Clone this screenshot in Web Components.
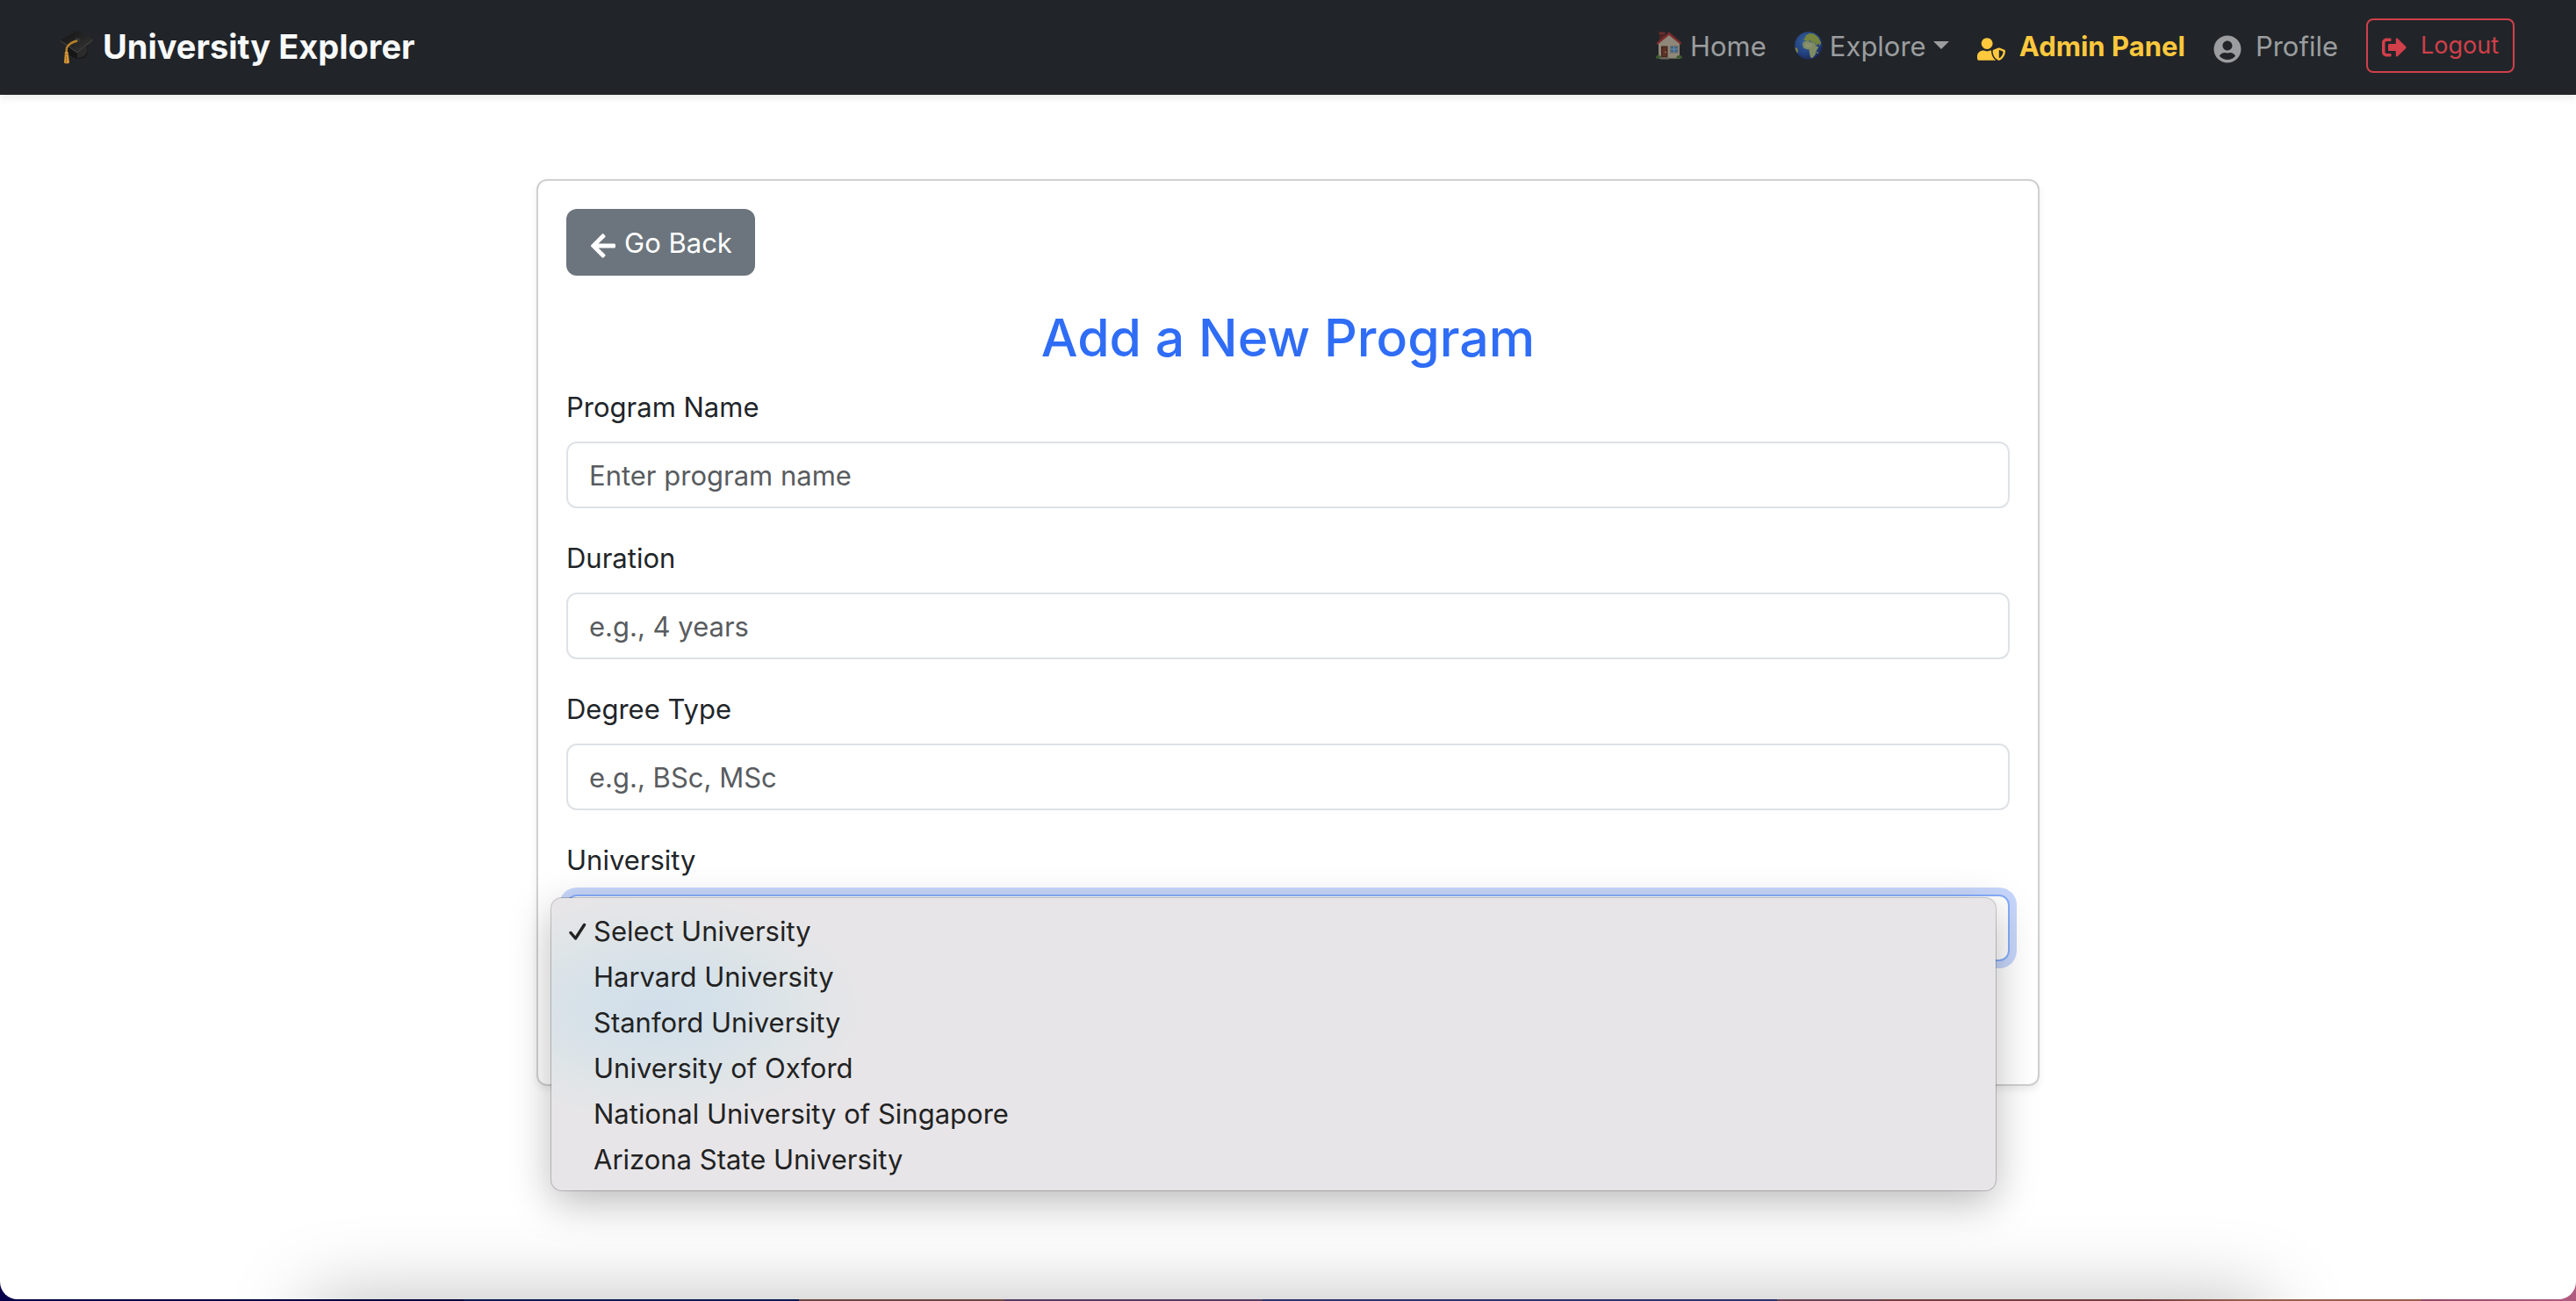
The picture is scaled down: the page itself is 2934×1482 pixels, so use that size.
<!DOCTYPE html>
<html lang="en">
<head>
<meta charset="utf-8">
<title>University Explorer</title>
<style>
  body {
    margin: 0;
    font: 400 31px/48px Inter, "Liberation Sans", sans-serif;
    color: #212529;
    background: linear-gradient(90deg, #06004a 0, #02003a 18%, #0a1850 18%, #0a1850 31%, #6f4545 31%, #6f4545 39%, #563a63 39%, #563a63 49%, #26346a 49%, #26346a 69%, #6a4456 69%, #6a4456 73%, #6f4040 73%, #6f4040 83%, #96604a 87%, #96604a 94%, #8c4a66 94%, #b05c80 100%);
  }
</style>
</head>
<body>
<ue-window>
  <ue-navbar slot="header">
    <ue-brand slot="brand">University Explorer</ue-brand>
    <ue-nav-link icon="house" tight>Home</ue-nav-link>
    <ue-nav-link icon="globe" tight caret>Explore</ue-nav-link>
    <ue-nav-link icon="shield" accent>Admin Panel</ue-nav-link>
    <ue-nav-link icon="user">Profile</ue-nav-link>
    <ue-button variant="outline" icon="logout">Logout</ue-button>
  </ue-navbar>
  <ue-card heading="Add a New Program">
    <ue-button slot="action" variant="secondary" icon="back">Go Back</ue-button>
    <ue-text-field label="Program Name" placeholder="Enter program name"></ue-text-field>
    <ue-text-field label="Duration" placeholder="e.g., 4 years"></ue-text-field>
    <ue-text-field label="Degree Type" placeholder="e.g., BSc, MSc"></ue-text-field>
    <ue-select-field label="University"></ue-select-field>
    <ue-button variant="primary"></ue-button>
  </ue-card>
</ue-window>

<script>
const ICONS = {
  shield: ['0 0 640 512', '<path fill="currentColor" d="M622.3 271.1l-115.2-45c-4.1-1.6-12.6-3.7-22.2 0l-115.2 45c-10.7 4.2-17.7 14-17.7 24.9 0 111.6 68.7 188.8 132.9 213.9 9.6 3.7 18 1.6 22.2 0C558.4 489.9 640 420.5 640 296c0-10.9-7-20.7-17.7-24.9zM496 462.4V273.3l95.5 37.3c-5.6 87.1-60.9 135.4-95.5 151.8zM224 256c70.7 0 128-57.3 128-128S294.7 0 224 0 96 57.3 96 128s57.3 128 128 128zm96 40c0-2.5.8-4.8 1.1-7.2-2.5-.1-4.9-.8-7.5-.8h-16.7c-22.2 10.2-46.9 16-72.9 16s-50.6-5.8-72.9-16h-16.7C60.2 288 0 348.2 0 422.4V464c0 26.5 21.5 48 48 48h352c6.8 0 13.3-1.5 19.2-4-54-42.9-99.2-116.7-99.2-212z"/>'],
  user: ['0 0 496 512', '<path fill="currentColor" d="M248 8C111 8 0 119 0 256s111 248 248 248 248-111 248-248S385 8 248 8zm0 96c48.6 0 88 39.4 88 88s-39.4 88-88 88-88-39.4-88-88 39.4-88 88-88zm0 344c-58.7 0-111.3-26.6-146.5-68.2 18.8-35.4 55.6-59.8 98.5-59.8 2.4 0 4.8.4 7.1 1.1 13 4.2 26.6 6.9 40.9 6.9 14.3 0 28-2.7 40.9-6.9 2.3-.7 4.7-1.1 7.1-1.1 42.9 0 79.7 24.4 98.5 59.8C359.3 421.4 306.7 448 248 448z"/>'],
  logout: ['0 0 512 512', '<path fill="currentColor" d="M497 273L329 441c-15 15-41 4.5-41-17v-96H152c-13.3 0-24-10.7-24-24v-96c0-13.3 10.7-24 24-24h136V88c0-21.4 25.9-32 41-17l168 168c9.3 9.4 9.3 24.6 0 34zM192 436v-40c0-6.6-5.4-12-12-12H96c-17.7 0-32-14.3-32-32V160c0-17.7 14.3-32 32-32h84c6.6 0 12-5.4 12-12V76c0-6.6-5.4-12-12-12H96c-53 0-96 43-96 96v192c0 53 43 96 96 96h84c6.6 0 12-5.4 12-12z"/>'],
  back: ['0 0 448 512', '<path fill="currentColor" d="M257.5 445.1l-22.2 22.2c-9.4 9.4-24.6 9.4-33.9 0L7 273c-9.4-9.4-9.4-24.6 0-33.9L201.4 44.7c9.4-9.4 24.6-9.4 33.9 0l22.2 22.2c9.5 9.5 9.3 25-.4 34.3L136.6 216H424c13.3 0 24 10.7 24 24v32c0 13.3-10.7 24-24 24H136.6l120.5 114.8c9.8 9.3 10 24.8.4 34.3z"/>'],
  check: ['0 0 20 20', '<path fill="none" stroke="currentColor" stroke-width="3.400" stroke-linecap="round" stroke-linejoin="round" d="M2 11.500l5.500 6.500L17.500 2.500"/>'],
  house: ['0 0 32 32', `
    <path fill="#31482b" d="M1 31v-2q1-3 4-2h22q3-1 4 2v2z"/>
    <path fill="#4b2524" d="M5 1h6v10H5z"/><path fill="#6b2f2d" d="M4.500 .500h7v2.500h-7z"/>
    <path fill="#8f8779" d="M4 13L16 2.500 28 13v17.500H4z"/>
    <path fill="#7b2b2c" d="M16 .500L30 12.500v3L16 4 2 15.500v-3z"/>
    <path fill="#47271f" d="M7 16.500h7.500v13H7z"/><path fill="#5e3226" d="M8.500 18h4.500v10H8.500z"/><circle cx="12" cy="23.500" r=".8" fill="#b09a60"/>
    <path fill="#74706a" d="M17 16h9.500v8.500H17z"/><path fill="#3f6486" d="M18 17h7.500v6.500H18z"/><path stroke="#6d8ea8" d="M21.700 17v6.500M18 20h7.500"/>
    <path fill="#6d675e" d="M6 29.500h10v2H6z"/><path fill="#3c5a2e" d="M1 30q0-3 3-3t3 3zM24 30q1-3 3.500-3t3.500 3z"/>`],
  globe: ['0 0 32 32', `
    <defs><radialGradient id="sea" cx=".4" cy=".35" r=".7"><stop offset="0" stop-color="#35619b"/><stop offset=".65" stop-color="#21407f"/><stop offset="1" stop-color="#1d2450"/></radialGradient></defs>
    <circle cx="16" cy="16" r="15.800" fill="url(#sea)"/>
    <path fill="#7e8a63" d="M9 14.500q0-3 3-3.500l3-.500 3 1.500 5 .500 1.500 4 3 1-2.500 4-1.500 5-3 3.500-2.500-.500-1-5-.500-4-3.500-.500-3-1.500z"/>
    <path fill="#75843f" d="M10 9l2-2 1-3 4-2 5 .500 5 4 3 6-1 4-2-3-2 2.500-2-3.500-4-1-2-1.500-2 1.500-2-1z"/>
    <path fill="#8a9270" d="M13 13l6 .500 2 3-5 2-4-1z"/>
    <path fill="#84893f" d="M.500 18l2.500 1 1 4-1 1.500Q.800 21 .500 18z"/>
    <circle cx="26" cy="24" r="1" fill="#7e8a63"/>`],
  cap: ['0 0 38 40', `
    <defs><linearGradient id="board" x1="0" y1="0" x2="1" y2="1"><stop offset="0" stop-color="#111"/><stop offset=".7" stop-color="#2d2d2d"/><stop offset="1" stop-color="#444"/></linearGradient></defs>
    <path fill="#161616" d="M9 17v9q4 8 14 8 6-1 8.500-5V15z"/><path fill="#2b2b2b" d="M20 28l11-9v8q-3 6-11 6z"/>
    <path fill="url(#board)" d="M.500 13L20 2l18 10-18 15z"/><path fill="none" stroke="#4a4a4a" d="M1 13.500L20 27l17.500-14.500"/>
    <ellipse cx="20.500" cy="12.500" rx="3" ry="2.500" fill="#333"/><path fill="none" stroke="#b98228" stroke-width="2.500" d="M20 13.500q-9 2-12 8l-.5 7"/>
    <path fill="#d8993a" d="M6 26h3.500l1.500 12.500q-3 2-6 0z"/><path stroke="#a86c1c" d="M6 29h4M7.500 31v8"/>`],
};

function define(name, template) {
  customElements.define(name, class extends HTMLElement {
    connectedCallback() {
      if (this.shadowRoot) return;
      this.attachShadow({ mode: 'open' }).innerHTML = template(this);
    }
  });
}

define('ue-icon', el => {
  const [box, art] = ICONS[el.getAttribute('name')];
  return `<style>
    :host { display: inline-block; width: 32px; height: 32px; vertical-align: middle; }
    svg { display: block; width: 100%; height: 100%; }
  </style><svg viewBox="${box}" aria-hidden="true">${art}</svg>`;
});

define('ue-window', () => `<style>
    :host { display: block; box-sizing: border-box; height: 100vh; padding-bottom: 2px; }
    .page { position: relative; height: 100%; overflow: hidden; background: #fff; border-radius: 0 0 20px 20px; }
    .page::after { content: ""; position: absolute; z-index: 3; left: 12%; right: 12%; top: 100%; height: 120px; box-shadow: 0 0 90px rgba(0,0,0,.26); pointer-events: none; }
    main { display: flex; justify-content: center; padding: 96px 24px; }
    main ::slotted(*) { flex: 0 1 1712px; }
  </style><div class="page"><slot name="header"></slot><main><slot></slot></main></div>`);

define('ue-navbar', () => `<style>
    :host { display: block; background: #212529; box-shadow: 0 4px 8px rgba(0,0,0,.08); }
    header { display: flex; align-items: center; justify-content: space-between; min-height: 72px; padding: 16px 70px 20px 68px; }
    nav { display: flex; align-items: center; gap: 32px; }
  </style><header><slot name="brand"></slot><nav><slot></slot></nav></header>`);

define('ue-brand', () => `<style>
    a { display: flex; align-items: center; gap: 11px; padding-top: 2px; color: #f8f9fa; font-size: 38px; line-height: 60px; font-weight: 700; text-decoration: none; }
    ue-icon { width: 38px; height: 40px; }
  </style><a href="#"><ue-icon name="cap"></ue-icon><span><slot></slot></span></a>`);

define('ue-nav-link', el => `<style>
    a { display: block; padding-top: 2px; color: #9b9d9f; text-decoration: none; white-space: nowrap; }
    ue-icon { margin-right: 16px; }
    :host([tight]) ue-icon { margin-right: 8px; vertical-align: -4px; }
    :host([accent]) a { color: #ffc83d; font-weight: 700; }
    .caret { display: inline-block; margin-left: 8px; vertical-align: 8px; border: 9px solid transparent; border-top-color: currentColor; border-bottom: 0; }
  </style><a href="#"><ue-icon name="${el.getAttribute('icon')}"></ue-icon><slot></slot>${el.hasAttribute('caret') ? '<span class="caret"></span>' : ''}</a>`);

define('ue-button', el => {
  const icon = el.getAttribute('icon');
  return `<style>
    :host { display: block; }
    button { display: block; min-height: 76px; padding: 13px 24px 11px; border: 2px solid transparent; border-radius: 12px; font: inherit; color: #fff; white-space: nowrap; }
    :host([variant=secondary]) button { background: #6c757d; }
    :host([variant=secondary]) ue-icon { margin-right: 8px; }
    :host([variant=primary]) button { background: #0d6efd; width: 216px; }
    :host([variant=outline]) button { min-height: 62px; padding: 8px 16px; border-color: #d13f4a; border-radius: 8px; background: none; color: #d13f4a; font-size: 27px; line-height: 42px; }
    :host([variant=outline]) ue-icon { width: 28px; height: 28px; margin-right: 16px; }
  </style><button type="button">${icon ? `<ue-icon name="${icon}"></ue-icon>` : ''}<slot></slot></button>`;
});

define('ue-card', el => `<style>
    :host { display: block; box-sizing: border-box; padding: 32px; border: 2px solid #d0d0d1; border-radius: 12px; background: #fff; box-shadow: 0 4px 8px rgba(0,0,0,.075); }
    .action { display: flex; margin-bottom: 32px; }
    h2 { margin: 0 0 16px; font-size: 59px; line-height: 77px; font-weight: 500; text-align: center; color: #2f6df6; }
    form { display: flex; flex-direction: column; gap: 32px; }
  </style><div class="action"><slot name="action"></slot></div><h2>${el.getAttribute('heading')}</h2><form><slot></slot></form>`);

const FIELD = `
    :host { display: block; }
    label { display: block; padding-top: 1px; margin-bottom: 15px; }
    input, select { display: block; box-sizing: border-box; width: 100%; height: 76px; padding: 12px 24px; border: 2px solid #dee2e6; border-radius: 12px; background: #fff; font: inherit; color: #212529; outline: 0; appearance: none; }
    input::placeholder { color: #595c5f; opacity: 1; }`;

define('ue-text-field', el => `<style>${FIELD}</style>
  <label for="field">${el.getAttribute('label')}</label>
  <input id="field" type="text" placeholder="${el.getAttribute('placeholder')}">`);

const UNIVERSITIES = ['Select University', 'Harvard University', 'Stanford University', 'University of Oxford', 'National University of Singapore', 'Arizona State University'];

define('ue-select-field', el => `<style>${FIELD}
    .control { position: relative; }
    select { border-color: #86aefb; box-shadow: 0 0 0 8px #c7d6fb; }
    ue-menu { position: absolute; z-index: 2; left: -17px; right: 16px; top: 4px; }
  </style>
  <label for="field">${el.getAttribute('label')}</label>
  <div class="control">
    <select id="field">${UNIVERSITIES.map(n => `<option>${n}</option>`).join('')}</select>
    <ue-menu></ue-menu>
  </div>`);

define('ue-menu', () => `<style>
    :host { display: block; border-radius: 12px; background: radial-gradient(ellipse 240px 130px at 120px 125px, #d1dfea 0, #d6e1e9 35%, #e0e5e7 72%, #e7e5e8 100%) #e7e5e8; box-shadow: 0 0 0 1px rgba(0,0,0,.2), 0 14px 48px rgba(0,0,0,.27); }
    ul { margin: 0; padding: 12px 20px 9px; list-style: none; }
    li { display: grid; grid-template-columns: 20px 1fr; column-gap: 8px; align-items: center; line-height: 52px; color: #222; }
    li span { grid-column: 2; }
    ue-icon { width: 20px; height: 20px; }
  </style>
  <ul role="listbox" aria-label="University">${UNIVERSITIES.map((n, i) => `<li role="option" aria-selected="${!i}">${i ? '' : '<ue-icon name="check"></ue-icon>'}<span>${n}</span></li>`).join('')}</ul>`);
</script>
</body>
</html>
